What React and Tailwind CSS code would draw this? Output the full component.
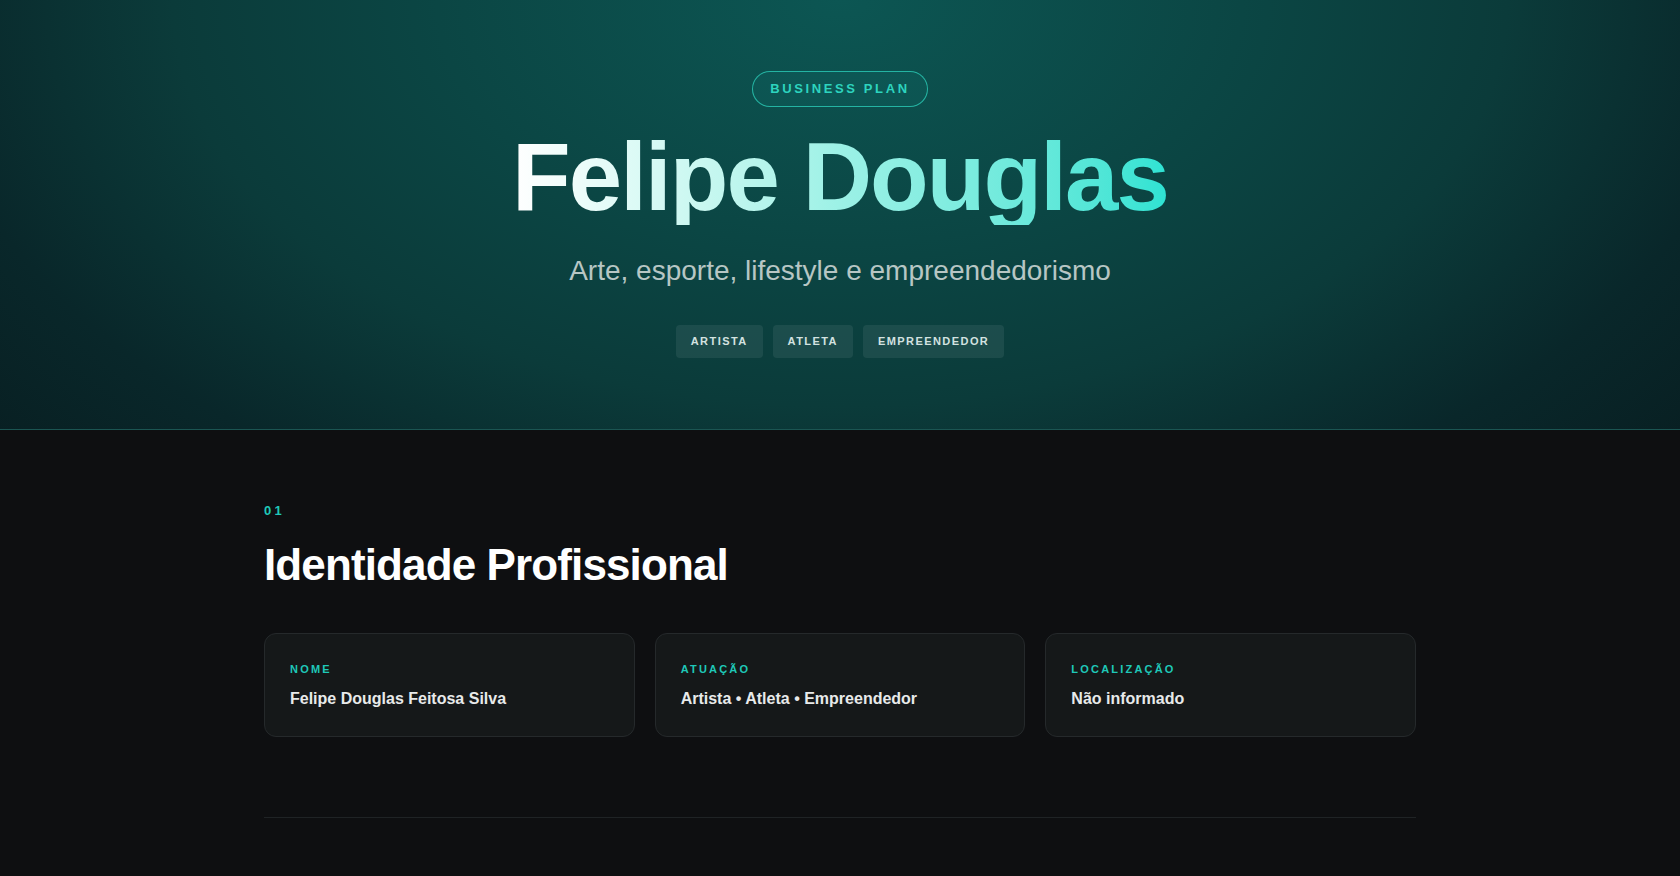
const tags = ["Artista", "Atleta", "Empreendedor"];

const cards = [
  { label: "Nome", value: "Felipe Douglas Feitosa Silva" },
  { label: "Atuação", value: "Artista • Atleta • Empreendedor" },
  { label: "Localização", value: "Não informado" },
];

export default function App() {
  return (
    <div className="min-h-screen bg-[#0e0f11] font-['Liberation_Sans',Arial,sans-serif]">
      {/* hero */}
      <header className="h-[430px] flex flex-col items-center pt-[71px] border-b border-[#1b5552] bg-[radial-gradient(ellipse_1150px_700px_at_50%_0%,#0c5653_0%,#0b4644_35%,#0b3b3a_58%,#09272a_80%,#081e21_100%)]">
        <span className="h-9 px-[17px] flex items-center rounded-full border border-[#2dd4bf]/75 bg-[#2dd4bf]/5 text-[13px] font-bold tracking-[0.2em] text-[#2dd4bf]">
          BUSINESS PLAN
        </span>
        <h1 className="mt-[22px] text-[96px] leading-none font-bold tracking-[-0.02em] bg-gradient-to-r from-white via-[#9cf1e6] to-[#2de3d3] bg-clip-text text-transparent">
          Felipe Douglas
        </h1>
        <p className="mt-[26px] text-[28px] leading-[1.45] text-[#b7c6c4]">
          Arte, esporte, lifestyle e empreendedorismo
        </p>
        <div className="mt-[33px] flex gap-[10px]">
          {tags.map((t) => (
            <span
              key={t}
              className="h-[33px] px-[15px] flex items-center rounded bg-white/[0.07] text-[11px] font-bold uppercase tracking-[0.13em] text-[#d3e2e0]"
            >
              {t}
            </span>
          ))}
        </div>
      </header>

      {/* section 01 */}
      <section className="max-w-6xl mx-auto pt-[73px]">
        <div className="text-[13px] leading-4 font-bold tracking-[0.25em] text-[#1fc8b8]">01</div>
        <h2 className="mt-[22px] text-[44px] leading-[1.1] font-bold tracking-[-0.02em] text-white">
          Identidade Profissional
        </h2>
        <div className="mt-11 grid grid-cols-3 gap-5">
          {cards.map((c) => (
            <div
              key={c.label}
              className="rounded-xl border border-[#25292b] bg-[#151819] px-[25px] pt-[27px] pb-[25px]"
            >
              <div className="text-[11px] leading-[1.5] font-bold uppercase tracking-[0.2em] text-[#1fc8b8]">
                {c.label}
              </div>
              <div className="mt-[9px] text-base leading-6 font-bold text-[#e8eaea]">{c.value}</div>
            </div>
          ))}
        </div>
        <div className="mt-20 h-px bg-[#1f2325]" />
      </section>
    </div>
  );
}
